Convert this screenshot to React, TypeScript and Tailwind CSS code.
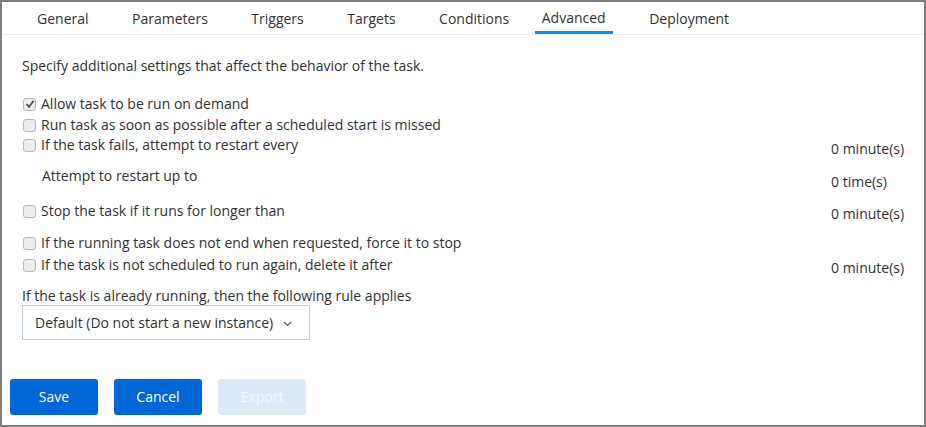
import React from "react";

const font = { fontFamily: '"Open Sans", "Noto Sans", sans-serif' };

function Box({ checked = false }: { checked?: boolean }) {
  return (
    <span className="inline-flex h-[13px] w-[13px] shrink-0 items-center justify-center rounded-[3px] border border-[#b8b8b8] bg-[#ececec]">
      {checked && (
        <svg width="10" height="10" viewBox="0 0 10 10">
          <path d="M1.5 5.2 L4 7.8 L8.6 1.8" fill="none" stroke="#555" strokeWidth="1.8" />
        </svg>
      )}
    </span>
  );
}

function CheckRow({ label, checked, value, valueOffset, className = "" }: { label: string; checked?: boolean; value?: string; valueOffset?: string; className?: string }) {
  return (
    <div className={"flex h-[20px] items-start justify-between " + className}>
      <div className="flex h-[20px] items-center">
        <span className="ml-[1px] mr-[5px] flex items-center"><Box checked={checked} /></span>
        <span>{label}</span>
      </div>
      {value && <div className={"relative w-[78px] leading-[20px] " + (valueOffset ?? "")}>{value}</div>}
    </div>
  );
}

export default function App() {
  const tabs = ["General", "Parameters", "Triggers", "Targets", "Conditions", "Advanced", "Deployment"];
  return (
    <div style={font} className="h-[427px] w-[926px] overflow-hidden border-2 border-[#7f7f7f] bg-white text-[14px] leading-[20px] text-[#333333]">
      <div className="flex h-[33px] gap-[29.5px] border-b border-[#e6edf3] pl-[28px]">
        {tabs.map((t) => (
          <div
            key={t}
            className={
              "flex h-full items-center px-[7px] " +
              (t === "Advanced" ? "ml-[-11px] border-b-[3px] border-[#0b8ee3] pt-[3px]" : "pt-[1px]")
            }
          >
            {t}
          </div>
        ))}
      </div>
      <div className="flex flex-col pl-[20px] pr-[15px]">
        <div className="mt-[21px]">Specify additional settings that affect the behavior of the task.</div>
        <CheckRow className="mt-[18px]" checked label="Allow task to be run on demand" />
        <CheckRow className="mt-[1px]" label="Run task as soon as possible after a scheduled start is missed" />
        <CheckRow label="If the task fails, attempt to restart every" value="0 minute(s)" valueOffset="top-[4px]" />
        <div className="mt-[11px] flex h-[20px] items-start justify-between">
          <div className="ml-[20px]">Attempt to restart up to</div>
          <div className="relative top-[6px] w-[78px]">0 time(s)</div>
        </div>
        <CheckRow className="mt-[15px]" label="Stop the task if it runs for longer than" value="0 minute(s)" valueOffset="top-[3px]" />
        <CheckRow className="mt-[12px]" label="If the running task does not end when requested, force it to stop" />
        <CheckRow className="mt-[2px]" label="If the task is not scheduled to run again, delete it after" value="0 minute(s)" valueOffset="top-[3px]" />
        <div className="mt-[11px] leading-[19px]">If the task is already running, then the following rule applies</div>
        <div className="flex h-[35px] w-[288px] items-center border border-[#c3d1dc] pl-[12px]">
          <span>Default (Do not start a new instance)</span>
          <svg className="ml-[10px] mt-[2px]" width="9" height="6" viewBox="0 0 9 6">
            <path d="M1 1 L4.5 4.5 L8 1" fill="none" stroke="#4a5560" strokeWidth="1.2" />
          </svg>
        </div>
      </div>
      <div className="mt-[39px] flex gap-[16px] pl-[8px]">
        <button className="h-[36px] w-[88px] rounded-[3px] bg-[#0067d6] text-[14px] text-white">Save</button>
        <button className="h-[36px] w-[88px] rounded-[3px] bg-[#0067d6] text-[14px] text-white">Cancel</button>
        <button className="h-[36px] w-[88px] rounded-[3px] bg-[#dde9f6] text-[14px] text-[#f4f8fc]">Export</button>
      </div>
    </div>
  );
}
